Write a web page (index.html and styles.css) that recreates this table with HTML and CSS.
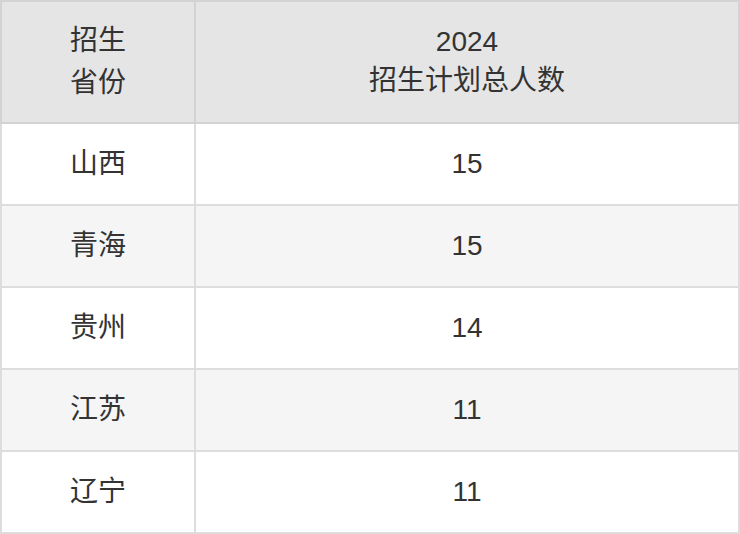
FILE: index.html
```html
<!DOCTYPE html>
<html lang="zh-CN">
<head>
<meta charset="utf-8">
<title>招生计划</title>
<link rel="stylesheet" href="styles.css">
</head>
<body>
<table class="plan">
  <thead>
    <tr>
      <th class="col-prov"><div class="cn-line">招生</div><div class="cn-line">省份</div></th>
      <th class="col-num"><div class="year-line">2024</div><div class="cn-line">招生计划总人数</div></th>
    </tr>
  </thead>
  <tbody>
    <tr><td>山西</td><td class="num">15</td></tr>
    <tr><td>青海</td><td class="num">15</td></tr>
    <tr><td>贵州</td><td class="num">14</td></tr>
    <tr><td>江苏</td><td class="num">11</td></tr>
    <tr><td>辽宁</td><td class="num">11</td></tr>
  </tbody>
</table>
</body>
</html>
```

FILE: styles.css
```css
html, body {
  margin: 0;
  padding: 0;
  background: #ffffff;
}

.plan {
  width: 740px;
  border-collapse: collapse;
  font-family: "Liberation Sans", "Noto Sans CJK SC", sans-serif;
  font-size: 28px;
  color: #333333;
}

.plan th,
.plan td {
  padding: 0;
  text-align: center;
  vertical-align: middle;
  font-weight: normal;
}

.plan th {
  height: 120px;
  background: #e5e5e5;
  border: 2px solid #d3d3d3;
}

.plan td {
  height: 80px;
  border: 2px solid #dddddd;
  line-height: 40px;
}

.plan .col-prov {
  width: 192px;
}

.plan tbody tr:nth-child(even) td {
  background: #f5f5f5;
}

.cn-line {
  line-height: 42px;
}

.year-line {
  line-height: 37px;
}
```
